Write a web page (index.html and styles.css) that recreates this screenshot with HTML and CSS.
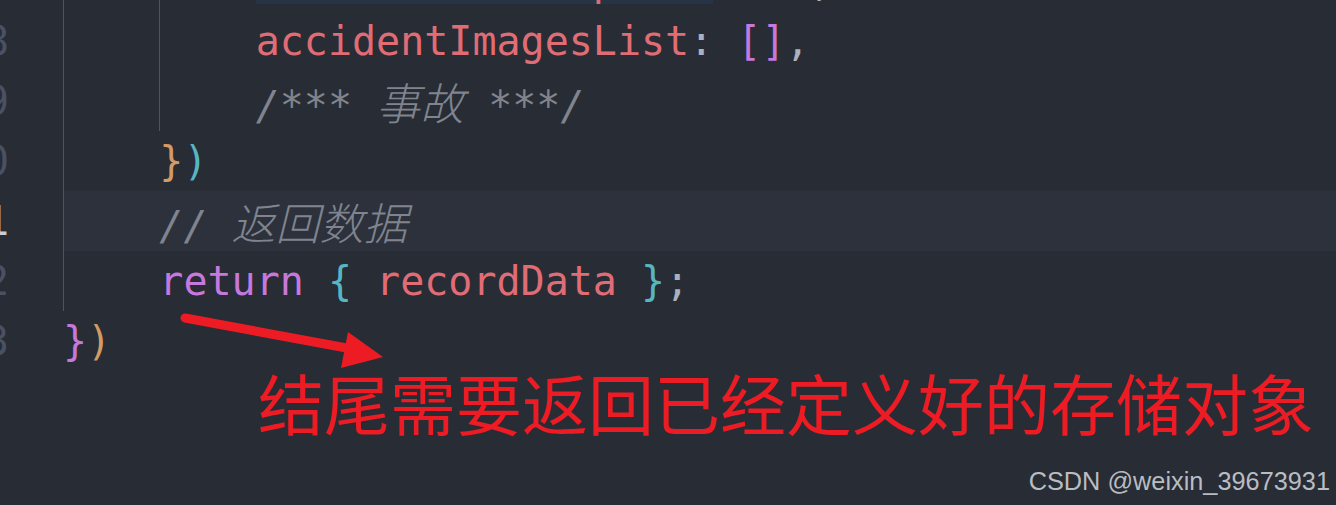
FILE: index.html
```html
<!DOCTYPE html>
<html lang="zh-CN">
<head>
<meta charset="utf-8">
<title>editor</title>
<link rel="stylesheet" href="styles.css">
</head>
<body>
<div class="editor">
  <div class="lines">
    <div class="row">
      <div class="ln"><span>47</span></div>
      <div class="code"><span class="ind"></span><span class="ind"></span><span class="txt"><span class="hl"><span class="prop">accidentDescription</span></span><span class="punc">: </span><span class="str">''</span><span class="punc">,</span></span></div>
    </div>
    <div class="row">
      <div class="ln"><span>48</span></div>
      <div class="code"><span class="ind"></span><span class="ind"></span><span class="txt"><span class="prop">accidentImagesList</span><span class="punc">: </span><span class="purple">[]</span><span class="punc">,</span></span></div>
    </div>
    <div class="row">
      <div class="ln"><span>49</span></div>
      <div class="code"><span class="ind"></span><span class="ind"></span><span class="txt"><span class="cmt">/*** <span class="cjk">事故</span> ***/</span></span></div>
    </div>
    <div class="row">
      <div class="ln"><span>50</span></div>
      <div class="code"><span class="ind"></span><span class="txt"><span class="orange">}</span><span class="cyan">)</span></span></div>
    </div>
    <div class="row current">
      <div class="ln"><span>51</span></div>
      <div class="code"><span class="ind"></span><span class="txt"><span class="cmt">// <span class="cjk">返回数据</span></span></span></div>
    </div>
    <div class="row">
      <div class="ln"><span>52</span></div>
      <div class="code"><span class="ind"></span><span class="txt"><span class="purple">return</span> <span class="cyan">{</span> <span class="prop">recordData</span> <span class="cyan">}</span><span class="punc">;</span></span></div>
    </div>
    <div class="row">
      <div class="ln"><span>53</span></div>
      <div class="code"><span class="txt"><span class="purple">}</span><span class="orange">)</span></span></div>
    </div>
    <div class="row">
      <div class="ln"></div>
      <div class="code"></div>
    </div>
    <div class="row">
      <div class="ln"></div>
      <div class="code"></div>
    </div>
  </div>

  <svg class="arrow" width="400" height="380" viewBox="0 0 400 380">
    <line x1="185" y1="318" x2="352" y2="349" stroke="#ed1c24" stroke-width="9" stroke-linecap="round"/>
    <polygon points="383,357 348,332 341,368" fill="#ed1c24"/>
  </svg>
  <div class="note">结尾需要返回已经定义好的存储对象</div>
  <div class="mark">CSDN @weixin_39673931</div>
</div>
</body>
</html>
```

FILE: styles.css
```css
html, body {
  margin: 0;
  padding: 0;
  background: #282c34;
}

body {
  width: 1336px;
  height: 505px;
  overflow: hidden;
}

.editor {
  position: relative;
  width: 1336px;
  height: 505px;
  overflow: hidden;
  background: #282c34;
}

.lines {
  margin-top: -49px;
  display: flex;
  flex-direction: column;
}

.row {
  display: flex;
  height: 60px;
  font-family: "DejaVu Sans Mono", "Noto Sans CJK SC", monospace;
  font-size: 40px;
  line-height: 60px;
  color: #abb2bf;
}

.ln {
  flex: none;
  width: 9px;
  margin-right: 54px;
  display: flex;
  justify-content: flex-end;
  overflow: hidden;
  color: #495162;
  white-space: nowrap;
}

.current .ln {
  color: #c8ccd4;
}

.code {
  flex: 1;
  display: flex;
  align-items: stretch;
}

.txt {
  white-space: pre;
}

.current .code {
  background: #2c313c;
}

.ind {
  flex: none;
  width: 4ch;
  box-shadow: inset 1px 0 0 #4f545d;
}

.hl {
  background: #263446;
}

.prop { color: #e06c75; }
.punc { color: #abb2bf; }
.str { color: #98c379; }
.purple { color: #c678dd; }
.cyan { color: #56b6c2; }
.orange { color: #d19a66; }

.cmt {
  color: #7f848e;
  font-style: italic;
}

.cjk {
  font-family: "Noto Sans CJK SC", sans-serif;
  font-weight: 300;
  font-size: 44px;
}

.arrow {
  position: absolute;
  left: 0;
  top: 0;
}

.note {
  position: absolute;
  left: 258px;
  top: 368px;
  font-family: "Noto Sans CJK SC", sans-serif;
  font-size: 66px;
  line-height: 66px;
  color: #ed1c24;
  white-space: nowrap;
}

.mark {
  position: absolute;
  right: 6px;
  top: 466px;
  font-family: "Liberation Sans", Arial, sans-serif;
  font-size: 25.3px;
  line-height: 30px;
  color: #b9bcc1;
  white-space: nowrap;
}
```
